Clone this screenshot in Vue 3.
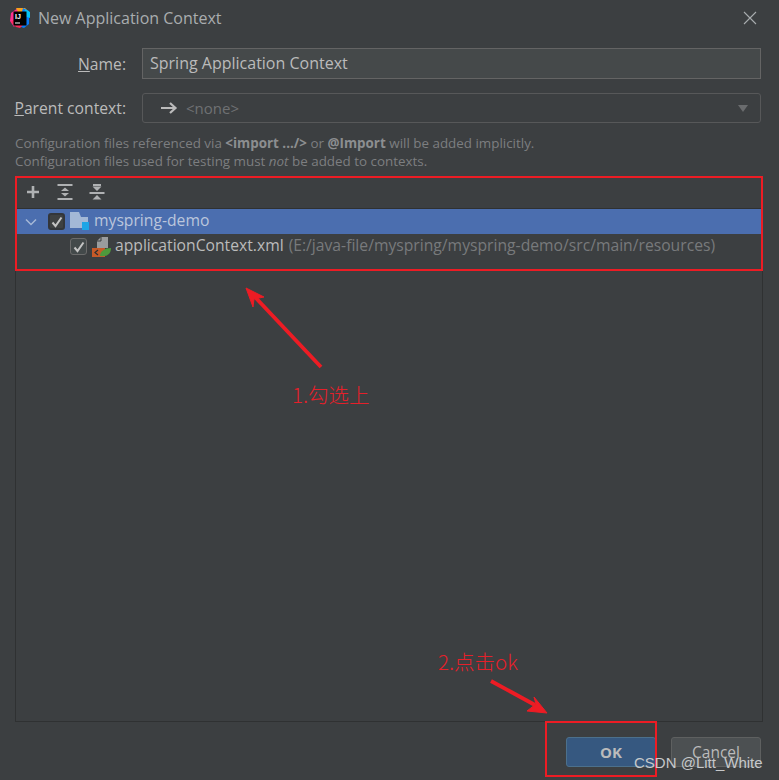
<script setup>
</script>

<template>
  <div class="dialog">
    <header class="titlebar">
      <svg class="logo" width="20" height="20" viewBox="0 0 20 20">
        <path d="M1 5 L8 0 H13 L10 10 L4 19 L0 13Z" fill="#fc318c" />
        <path d="M6 0 H15 L19 4 L10 8Z" fill="#f9a11b" />
        <path d="M13 0 L19 3 V16 L14 20 L8 18Z" fill="#087cfa" />
        <path d="M15 1 L20 4 V10 L14 8Z" fill="#07c3f2" />
        <path d="M1 14 L6 19 L10 20 L14 16 L6 10Z" fill="#fe2857" />
        <rect x="3.5" y="3.5" width="13" height="14" fill="#000" />
        <text x="5" y="10.5" class="logo-text">IJ</text>
        <rect x="5" y="14.5" width="5" height="1" fill="#fff" />
      </svg>
      <span class="title">New Application Context</span>
      <svg class="close" width="14" height="14" viewBox="0 0 14 14">
        <path d="M1 1 L13 13 M13 1 L1 13" stroke="#a9adaf" stroke-width="1.1" fill="none" />
      </svg>
    </header>

    <div class="form">
      <div class="field name-field">
        <label class="field-label"><u>N</u>ame:</label>
        <div class="input">Spring Application Context</div>
      </div>
      <div class="field parent-field">
        <label class="field-label"><u>P</u>arent context:</label>
        <div class="select">
          <svg class="select-arrow" width="18" height="14" viewBox="0 0 18 14">
            <path d="M1 7 H15 M10 2 L15.5 7 L10 12" stroke="#bbbbbb" stroke-width="2.2" fill="none" />
          </svg>
          <span class="none">&lt;none&gt;</span>
          <span class="caret"></span>
        </div>
      </div>
    </div>

    <p class="hint">
      Configuration files referenced via <b>&lt;import .../&gt;</b> or <b>@Import</b> will be added implicitly.<br />
      Configuration files used for testing must <i>not</i> be added to contexts.
    </p>

    <section class="panel">
      <div class="toolbar">
        <svg width="16" height="16" viewBox="0 0 16 16">
          <path d="M8 2 V14 M2 8 H14" stroke="#afb1b3" stroke-width="2.6" fill="none" />
        </svg>
        <svg width="16" height="16" viewBox="0 0 16 16">
          <path d="M0.5 1 H15.5 M0.5 15 H15.5" stroke="#afb1b3" stroke-width="2" fill="none" />
          <path d="M8 3.5 L12 7 H4Z M8 12.5 L12 9 H4Z" fill="#afb1b3" />
        </svg>
        <svg width="16" height="16" viewBox="0 0 16 16">
          <path d="M4 1 H12 M0.5 9 H15.5" stroke="#afb1b3" stroke-width="2" fill="none" />
          <path d="M8 7 L3.5 2.5 H12.5Z M8 11 L12.5 15.5 H3.5Z" fill="#afb1b3" />
        </svg>
      </div>

      <div class="row selected">
        <svg class="chevron" width="12" height="8" viewBox="0 0 12 8">
          <path d="M1 1.5 L6 6.5 L11 1.5" stroke="#a6b8d6" stroke-width="1.5" fill="none" />
        </svg>
        <span class="check focused">
          <svg width="12" height="12" viewBox="0 0 12 12"><path d="M1.5 6.5 L4.5 10 L10.5 1.5" stroke="#c4c4c4" stroke-width="2" fill="none" /></svg>
        </span>
        <svg class="module" width="19" height="19" viewBox="0 0 19 19">
          <path d="M0 0 H9 L11 5 H18 V16 H0Z" fill="#a3b8d6" />
          <rect x="12" y="10" width="7" height="8" fill="#1ea5e6" />
        </svg>
        <span class="row-name">myspring-demo</span>
      </div>

      <div class="row child">
        <span class="check">
          <svg width="12" height="12" viewBox="0 0 12 12"><path d="M1.5 6.5 L4.5 10 L10.5 1.5" stroke="#c4c4c4" stroke-width="2" fill="none" /></svg>
        </span>
        <svg class="xml" width="19" height="20" viewBox="0 0 19 20">
          <path d="M9 0 H16 V11 H5 V4Z" fill="#9a9c9e" />
          <path d="M9 0 V4 H5" stroke="#3c3f41" stroke-width="1" fill="none" />
          <rect x="0" y="11" width="13" height="9" fill="#c75a28" />
          <path d="M6 13 L3 15.5 L6 18" stroke="#2d2f30" stroke-width="1.2" fill="none" />
          <path d="M8 19 C8 14 13 11 19 11 C19 17 15 20 8 19Z" fill="#4e9a3c" />
        </svg>
        <span class="row-name">applicationContext.xml</span>
        <span class="path">(E:/java-file/myspring/myspring-demo/src/main/resources)</span>
      </div>
    </section>

    <footer class="actions">
      <button class="btn primary">OK</button>
      <button class="btn">Cancel</button>
    </footer>

    <div class="mark box-tree"></div>
    <div class="mark box-ok"></div>
    <svg class="arrows" width="779" height="780" viewBox="0 0 779 780">
      <path d="M321 367 L255 297" stroke="#ed1c24" stroke-width="3.8" fill="none" />
      <path d="M246 288 L264 297 L254 299 L253 307Z" fill="#ed1c24" stroke="#ed1c24" />
      <path d="M491 681 L535 705" stroke="#ed1c24" stroke-width="3.8" fill="none" />
      <path d="M547 713 L527 711 L536 704 L534 697Z" fill="#ed1c24" stroke="#ed1c24" />
    </svg>
    <span class="note note-1">1.勾选上</span>
    <span class="note note-2">2.点击ok</span>
    <span class="watermark">CSDN @Litt_White</span>
  </div>
</template>

<style scoped>
.dialog {
  position: relative;
  width: 779px;
  height: 780px;
  overflow: hidden;
  background: #3c3f41;
  color: #bbbbbb;
  font-family: "Open Sans", "Noto Sans", sans-serif;
  font-size: 15.7px;
  box-sizing: border-box;
}
.titlebar {
  display: flex;
  align-items: center;
  height: 36px;
  padding: 0 0 0 10px;
}
.logo { flex: none; margin-right: 8px; }
.logo-text { font: bold 7px "Liberation Sans", sans-serif; fill: #fff; }
.title { color: #a9adaf; font-size: 16px; line-height: 36px; }
.close { margin-left: auto; margin-right: 22px; }
.form { padding: 12px 18px 0 13px; }
.field { display: flex; align-items: center; }
.parent-field { margin-top: 14px; }
.field-label { width: 129px; flex: none; white-space: nowrap; text-align: right; padding-right: 16px; box-sizing: border-box; color: #bbbbbb; }
.input {
  flex: 1;
  height: 31px;
  line-height: 28px;
  padding-left: 7px;
  background: #45494a;
  border: 1px solid #646464;
  box-sizing: border-box;
  color: #bbbbbb;
  font-size: 16px;
}
.select {
  flex: 1;
  height: 30px;
  display: flex;
  align-items: center;
  padding: 0 12px 0 17px;
  border: 1px solid #575859;
  border-radius: 3px;
  box-sizing: border-box;
}
.select-arrow { margin-right: 8px; }
.none { color: #6f7173; font-size: 15px; }
.caret {
  margin-left: auto;
  border-left: 5px solid transparent;
  border-right: 5px solid transparent;
  border-top: 7px solid #6a6c6e;
}
.hint {
  margin: 11px 0 0 15px;
  font-size: 13.4px;
  line-height: 18px;
  color: #7c7e80;
}
.hint b { color: #8c8e90; }
.panel {
  margin: 6px 16px 0 15px;
  height: 546px;
  box-sizing: border-box;
  border: 1px solid #2f3132;
  border-top: 0;
}
.toolbar {
  height: 32px;
  display: flex;
  align-items: center;
  gap: 16px;
  padding-left: 9px;
  border-bottom: 1px solid #2f3132;
  box-sizing: content-box;
}
.row {
  display: flex;
  align-items: center;
  height: 25px;
  color: #bbbbbb;
  white-space: nowrap;
}
.row-name, .path { padding-bottom: 4px; }
.selected { background: #4b6eaf; }
.selected .row-name { color: #bbc6dc; }
.chevron { margin-left: 9px; margin-right: 11px; }
.check {
  display: flex;
  align-items: center;
  justify-content: center;
  width: 17px;
  height: 17px;
  box-sizing: border-box;
  background: #43494a;
  border: 1px solid #6b6b6b;
  border-radius: 3px;
  flex: none;
}
.check.focused { background: #3e4142; border: 2px solid #33363a; }
.module { margin-left: 5px; margin-right: 5px; flex: none; }
.child { padding-left: 54px; }
.xml { margin-left: 5px; margin-right: 4px; flex: none; }
.path { color: #787a7c; margin-left: 5px; }
.actions {
  display: flex;
  justify-content: flex-end;
  gap: 15px;
  margin-top: 15px;
  padding-right: 18px;
}
.btn {
  width: 90px;
  height: 30px;
  padding: 0;
  font: 15.5px "Open Sans", "Noto Sans", sans-serif;
  color: #bbbbbb;
  background: #4c5052;
  border: 1px solid #5e6060;
  border-radius: 3px;
  box-sizing: border-box;
}
.primary {
  background: #365880;
  border-color: #4c708c;
  font-size: 15px;
  font-weight: 700;
  color: #bbbbbb;
}
.mark {
  position: absolute;
  border: 2px solid #ed1c24;
  box-sizing: border-box;
}
.box-tree { left: 15px; top: 176px; width: 748px; height: 95px; }
.box-ok { left: 545px; top: 721px; width: 112px; height: 56px; }
.arrows { position: absolute; left: 0; top: 0; pointer-events: none; }
.note {
  position: absolute;
  color: #e5202a;
  font-family: "Noto Sans CJK SC", sans-serif;
  font-size: 20.5px;
  font-weight: 300;
  white-space: nowrap;
  line-height: 24px;
}
.note-1 { left: 292px; top: 382px; }
.note-2 { left: 438px; top: 649px; }
.watermark {
  position: absolute;
  left: 634px;
  top: 753px;
  color: #c6c8ca;
  font-family: "Liberation Sans", sans-serif;
  font-size: 15px;
  line-height: 20px;
  white-space: nowrap;
}
</style>
